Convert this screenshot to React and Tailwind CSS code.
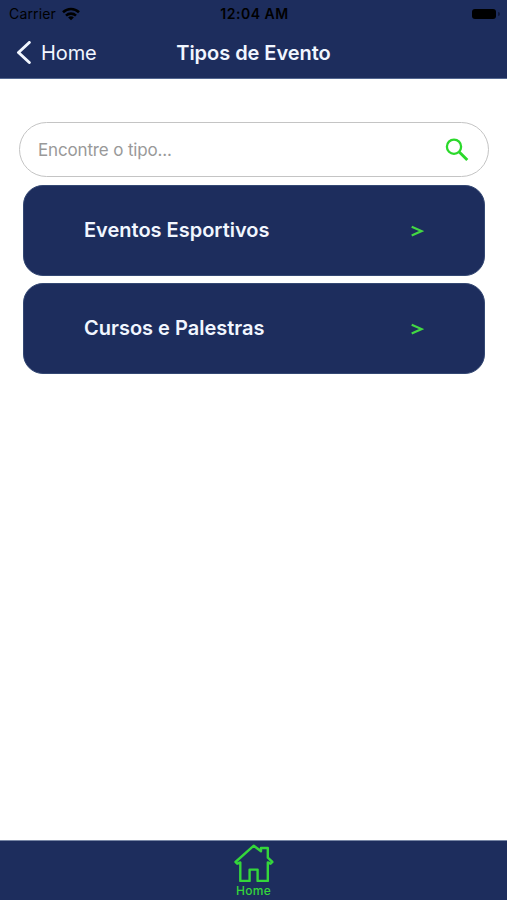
const eventTypes = ['Eventos Esportivos', 'Cursos e Palestras'];

const StatusBar = () => (
  <div className="grid grid-cols-3 items-center h-[27px] pl-[9px] pr-[7px] text-black">
    <div className="flex items-center gap-[6px]">
      <span className="text-[14px] leading-none tracking-[0.15px] pt-px">Carrier</span>
      <svg width="18" height="14" viewBox="0 0 18 14" fill="none" stroke="currentColor" strokeWidth="2.6">
        <path d="M1 5.2C5.6 0.9 12.4 0.9 17 5.2" />
        <path d="M4 8.6C6.8 6 11.2 6 14 8.6" />
        <path d="M9 13.3L6.1 10.4C7.7 9 10.3 9 11.9 10.4Z" fill="currentColor" stroke="none" />
      </svg>
    </div>
    <span className="text-center text-[14px] font-semibold leading-none tracking-[0.5px] whitespace-nowrap pt-px">12:04 AM</span>
    <div className="flex justify-end items-center gap-[2px]">
      <span className="w-6 h-[10px] rounded-[3px] bg-black" />
      <span className="w-[2px] h-1 rounded-r-full bg-[#10183a]" />
    </div>
  </div>
);

const Header = () => (
  <header className="bg-[#1d2d5d] h-[79px] shrink-0 border-b border-[#536790]">
    <StatusBar />
    <div className="grid grid-cols-[1fr_auto_1fr] items-center h-[51px] pl-4 pr-4 text-[#f1f6ff]">
      <button className="flex items-center gap-[9px]">
        <svg width="16" height="24" viewBox="0 0 16 24" fill="none" stroke="currentColor" strokeWidth="3" strokeLinecap="round" strokeLinejoin="round">
          <path d="M13.3 1.5L2.5 11.5L13.3 21.5" />
        </svg>
        <span className="text-[20px] leading-none tracking-[-0.1px]">Home</span>
      </button>
      <h1 className="text-[20px] font-semibold leading-none tracking-[-0.04px]">Tipos de Evento</h1>
    </div>
  </header>
);

const SearchBox = () => (
  <div className="flex items-center justify-between h-[55px] ml-[19px] mr-[18px] pl-[18px] pr-[19px] rounded-full border border-[#c4c4c4]">
    <span className="text-[17px] leading-none tracking-[-0.15px] text-[#999] pt-px">Encontre o tipo...</span>
    <svg width="24" height="24" viewBox="0 0 24 24" fill="none" stroke="#2bd92b" strokeWidth="2.3">
      <circle cx="9" cy="8.7" r="7.1" />
      <path d="M14 13.7L22.3 22" strokeWidth="2.9" />
    </svg>
  </div>
);

const TypeCard = ({ name }) => (
  <button className="flex items-center justify-between w-full h-[91px] pl-[60px] pr-[60px] rounded-[20px] bg-[#1d2d5d] border border-[#344873]">
    <span className="text-[20px] font-semibold leading-none text-[#f1f6ff] pb-[2px]">{name}</span>
    <svg width="13" height="12" viewBox="0 0 13 12" fill="none" stroke="#43d843" strokeWidth="2.2">
      <path d="M0.7 1.8L10.6 6.1L0.7 10.4" />
    </svg>
  </button>
);

const TabBar = () => (
  <nav className="flex flex-col items-center h-[60px] shrink-0 pt-[3px] bg-[#1d2d5d] border-t border-[#7786a5] text-[#34d63b]">
    <svg width="40" height="38" viewBox="0 0 40 38" fill="none" stroke="currentColor" strokeWidth="2.4" strokeLinejoin="round">
      <path d="M19.8 1.7L1.5 18L3.2 19.7L6.3 18.4V37H15.6V25.6H23.6V37H33.8V18.4L36.6 19.7L38.4 18L33.8 13.7V4H27V7.3Z" />
    </svg>
    <span className="mt-[3px] text-[12px] font-medium leading-none tracking-[0.3px]">Home</span>
  </nav>
);

const App = () => {
  return (
    <div className="flex flex-col w-full h-screen bg-white font-['Inter',sans-serif]">
      <Header />
      <main className="flex-1 pt-[43px]">
        <SearchBox />
        <div className="flex flex-col gap-[7px] mt-2 ml-[23px] mr-[22px]">
          {eventTypes.map((name) => (
            <TypeCard key={name} name={name} />
          ))}
        </div>
      </main>
      <TabBar />
    </div>
  );
};

export default App;
